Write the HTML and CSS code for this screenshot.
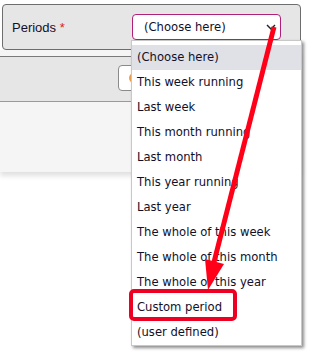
FILE: index.html
```html
<!DOCTYPE html>
<html>

<head>
    <meta charset="UTF-8">
    <title>Periods</title>
    <link rel="stylesheet" href="styles.css">
</head>

<body>

    <div class="panel">
        <label class="label">Periods <span class="req">*</span></label>
        <div class="select">
            <span>(Choose here)</span>
            <svg class="chevron" width="10" height="7" viewBox="0 0 10 7">
                <path d="M1 1 L5 5 L9 1" fill="none" stroke="#222" stroke-width="1.4" />
            </svg>
        </div>
    </div>

    <div class="section">
        <div class="bar">
            <button class="btn">
                <svg width="12" height="12" viewBox="0 0 12 12">
                    <circle cx="6" cy="6" r="5" fill="#f0a050" />
                </svg>
            </button>
        </div>
    </div>

    <ul class="list">
        <li class="active">(Choose here)</li>
        <li>This week running</li>
        <li>Last week</li>
        <li>This month running</li>
        <li>Last month</li>
        <li>This year running</li>
        <li>Last year</li>
        <li>The whole of this week</li>
        <li>The whole of this month</li>
        <li>The whole of this year</li>
        <li>Custom period</li>
        <li>(user defined)</li>
    </ul>

    <div class="mark"></div>

    <svg class="arrow" width="313" height="357" viewBox="0 0 313 357">
        <line x1="274" y1="27" x2="213" y2="266" stroke="#ff0018" stroke-width="5" />
        <polygon points="208,290 224,264 205,259" fill="#ff0018" />
    </svg>

</body>

</html>
```

FILE: styles.css
```css
* {
    margin: 0;
    padding: 0;
    box-sizing: border-box;
}

body {
    background: #ffffff;
    font-family: "DejaVu Sans", Verdana, sans-serif;
    font-size: 11.6px;
    color: #10102a;
    width: 313px;
    height: 357px;
    overflow: hidden;
}

.panel {
    display: flex;
    align-items: center;
    width: 299px;
    height: 46px;
    margin: 4px 0 0 2px;
    padding-left: 9px;
    background: #e6e6e6;
    border: 1px solid #6e6e6e;
    border-radius: 4px;
}

.label {
    width: 120px;
    font-family: "Liberation Sans", Arial, sans-serif;
    font-size: 13px;
}

.req {
    color: #e02020;
}

.select {
    display: flex;
    align-items: center;
    justify-content: space-between;
    width: 149px;
    height: 26px;
    padding: 0 4px 0 11px;
    background: #ffffff;
    border: 1px solid #b0207a;
    border-radius: 4px;
}

.section {
    width: 300px;
    height: 122px;
    padding-top: 6px;
    background: #f5f5f5;
    box-shadow: 0 4px 5px rgba(0, 0, 0, 0.12);
}

.bar {
    height: 46px;
    padding: 8px 0 0 118px;
    background: #e6e6e6;
    border-top: 1px solid #7a7a7a;
    border-bottom: 1px solid #9a9a9a;
}

.btn {
    display: flex;
    align-items: center;
    width: 60px;
    height: 26px;
    padding: 0 9px;
    background: #ffffff;
    border: 1px solid #8a8a8a;
    border-radius: 4px;
}

.list {
    position: absolute;
    left: 131px;
    top: 40px;
    width: 171px;
    padding-top: 4px;
    list-style: none;
    background: #ffffff;
    border: 1px solid #c8c8c8;
    box-shadow: 2px 2px 3px rgba(0, 0, 0, 0.45);
}

.list>li {
    height: 25px;
    line-height: 25px;
    padding-left: 5px;
    white-space: nowrap;
}

.list>li.active {
    background: #e0e0e7;
}

.mark {
    position: absolute;
    left: 129px;
    top: 289px;
    width: 108px;
    height: 32px;
    border: 4px solid #ee0022;
    border-radius: 5px;
}

.arrow {
    position: absolute;
    left: 0;
    top: 0;
    pointer-events: none;
}
```
